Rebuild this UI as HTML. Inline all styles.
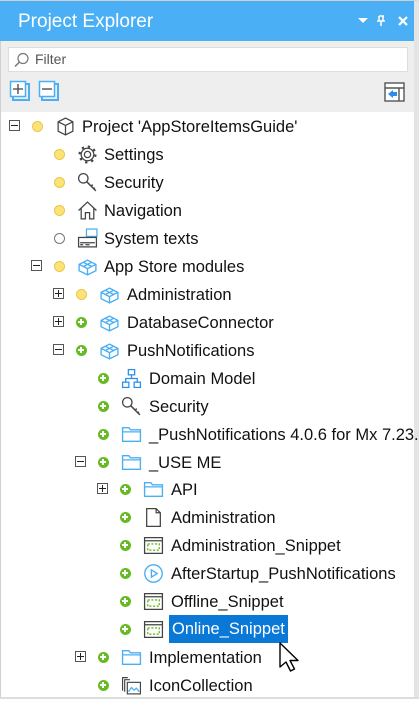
<!DOCTYPE html>
<html><head><meta charset="utf-8"><style>
*{margin:0;padding:0;box-sizing:border-box}
body{width:419px;height:699px;overflow:hidden;background:#fff;font-family:"Liberation Sans",sans-serif;position:relative}
#frame{position:absolute;left:0;top:0;width:419px;height:699px;border:1px solid #d0d0d0;border-right:5px solid #e4e4e4}
#title{position:absolute;left:0;top:1px;width:414px;height:40px;background:#4aaff5;color:#fff;font-size:19px;line-height:42px;padding-left:18px}
#tb{position:absolute;left:1px;top:41px;width:413px;height:71px;background:#eeeeee}
#filter{position:absolute;left:8px;top:47px;width:400px;height:25px;background:#fff;border:1px solid #ddd;font-size:14px;color:#555;line-height:23px;padding-left:26px}
.r{position:absolute;height:28px;font-size:16.5px;line-height:30px;color:#111;white-space:nowrap}
.exp{position:absolute;width:11px;height:11px;border:1px solid #555;background:#fff}
.exp::before{content:"";position:absolute;left:1px;top:4px;width:7px;height:1px;background:#222}
.exp.p::after{content:"";position:absolute;left:4px;top:1px;width:1px;height:7px;background:#222}
.dot{position:absolute;width:11px;height:11px;border-radius:50%;margin:-0.5px 0 0 -0.5px}
.Y{background:#fde27a;border:1px solid #e8c84a}
.O{background:#fff;border:1px solid #777}
.G{background:#66bb22}
.G::before{content:"";position:absolute;left:2.5px;top:4.5px;width:6px;height:2px;background:#fff}
.G::after{content:"";position:absolute;left:4.5px;top:2.5px;width:2px;height:6px;background:#fff}
svg.i{position:absolute;width:21px;height:21px}
.t{position:absolute}
</style></head><body>
<div id="frame"></div>
<div id="title">Project Explorer
<svg style="position:absolute;left:358px;top:17px" width="10" height="6"><path d="M0 0h10L5 5z" fill="#fff"/></svg>
<svg style="position:absolute;left:376px;top:14px" width="10" height="12"><path d="M3 1h5M3 1v5M7 1v5M1 6h8M5 6v5" stroke="#fff" stroke-width="1.5" fill="none"/></svg>
<svg style="position:absolute;left:398px;top:15px" width="10" height="10"><path d="M1 1l8 8M9 1l-8 8" stroke="#fff" stroke-width="2.2"/></svg>
</div>
<div id="tb"></div>
<div id="filter"><svg style="position:absolute;left:5px;top:4px" width="16" height="16"><circle cx="9" cy="6.5" r="5" stroke="#777" fill="none" stroke-width="1.2"/><path d="M5.5 10L1 14.5" stroke="#777" stroke-width="1.5"/></svg>Filter</div>
<svg style="position:absolute;left:9px;top:80px" width="24" height="24"><rect x="4" y="4" width="16" height="16" fill="none" stroke="#4aaff5" stroke-width="2"/><rect x="1.5" y="1.5" width="15" height="15" fill="#fff" stroke="#4aaff5" stroke-width="1.5"/><path d="M4 9h10M9 4v10" stroke="#444" stroke-width="1.3"/></svg>
<svg style="position:absolute;left:38px;top:80px" width="24" height="24"><rect x="4" y="4" width="16" height="16" fill="none" stroke="#4aaff5" stroke-width="2"/><rect x="1.5" y="1.5" width="15" height="15" fill="#fff" stroke="#4aaff5" stroke-width="1.5"/><path d="M4 9h10" stroke="#444" stroke-width="1.3"/></svg>
<svg style="position:absolute;left:384px;top:82px" width="21" height="20"><rect x="1" y="1" width="19" height="18" fill="#fff" stroke="#555" stroke-width="1.4"/><path d="M1 6h19M15 6v13" stroke="#555" stroke-width="1.4"/><path d="M4 12l5-4v8z" fill="#2b8ee8"/><rect x="8" y="10" width="5" height="4" fill="#2b8ee8"/></svg>

<div class="exp" style="left:9px;top:120px"></div>
<div class="dot Y" style="left:32px;top:121px"></div>
<svg class="i" style="left:55px;top:116px" viewBox="0 0 20 20"><path d="M10 2l7 3.5v9L10 18l-7-3.5v-9zM3 5.5L10 9l7-3.5M10 9v9" fill="none" stroke="#444" stroke-width="1.2"/></svg>
<div class="r t" style="left:82px;top:112px">Project 'AppStoreItemsGuide'</div>

<div class="dot Y" style="left:54px;top:149px"></div>
<svg class="i" style="left:77px;top:144px" viewBox="0 0 20 20"><circle cx="10" cy="10" r="3" fill="none" stroke="#444" stroke-width="1.2"/><circle cx="10" cy="10" r="6" fill="none" stroke="#444" stroke-width="1.2"/><circle cx="10" cy="10" r="7.5" fill="none" stroke="#444" stroke-width="2.2" stroke-dasharray="2.2 3.7"/></svg>
<div class="r t" style="left:104px;top:140px">Settings</div>

<div class="dot Y" style="left:54px;top:177px"></div>
<svg class="i" style="left:77px;top:172px" viewBox="0 0 20 20"><circle cx="6" cy="6" r="4.5" fill="none" stroke="#444" stroke-width="1.2"/><path d="M9 9l9 9M13 14l2-2M15.5 16.5l1.5-1.5" stroke="#444" stroke-width="1.4"/></svg>
<div class="r t" style="left:104px;top:168px">Security</div>

<div class="dot Y" style="left:54px;top:205px"></div>
<svg class="i" style="left:77px;top:200px" viewBox="0 0 20 20"><path d="M1.5 10L10 2l8.5 8M4 8v10h4v-6h4v6h4V8" fill="none" stroke="#444" stroke-width="1.2"/></svg>
<div class="r t" style="left:104px;top:196px">Navigation</div>

<div class="dot O" style="left:54px;top:233px"></div>
<svg class="i" style="left:77px;top:228px" viewBox="0 0 20 20"><rect x="9" y="1" width="10" height="7" fill="#fff" stroke="#4aaff5" stroke-width="1.2"/><rect x="1.5" y="9" width="17" height="9" fill="#fff" stroke="#444" stroke-width="1.2"/><path d="M3 14h14M3 16h3M8 16h4" stroke="#444" stroke-width="1.2"/></svg>
<div class="r t" style="left:104px;top:224px">System texts</div>

<div class="exp" style="left:31px;top:260px"></div>
<div class="dot Y" style="left:54px;top:261px"></div>
<svg class="i" style="left:77px;top:256px" viewBox="0 0 20 20"><path d="M2 8l8-4 8 4v6l-8 4-8-4zM2 8l8 4 8-4M10 12v6M6 6l8 4M14 6l-8 4" fill="none" stroke="#4aaff5" stroke-width="1.3"/></svg>
<div class="r t" style="left:104px;top:252px">App Store modules</div>

<div class="exp p" style="left:53px;top:288px"></div>
<div class="dot Y" style="left:76px;top:289px"></div>
<svg class="i" style="left:99px;top:284px" viewBox="0 0 20 20"><path d="M2 8l8-4 8 4v6l-8 4-8-4zM2 8l8 4 8-4M10 12v6M6 6l8 4M14 6l-8 4" fill="none" stroke="#4aaff5" stroke-width="1.3"/></svg>
<div class="r t" style="left:127px;top:280px">Administration</div>

<div class="exp p" style="left:53px;top:316px"></div>
<div class="dot G" style="left:76px;top:317px"></div>
<svg class="i" style="left:99px;top:312px" viewBox="0 0 20 20"><path d="M2 8l8-4 8 4v6l-8 4-8-4zM2 8l8 4 8-4M10 12v6M6 6l8 4M14 6l-8 4" fill="none" stroke="#4aaff5" stroke-width="1.3"/></svg>
<div class="r t" style="left:127px;top:308px">DatabaseConnector</div>

<div class="exp" style="left:53px;top:344px"></div>
<div class="dot G" style="left:76px;top:345px"></div>
<svg class="i" style="left:99px;top:340px" viewBox="0 0 20 20"><path d="M2 8l8-4 8 4v6l-8 4-8-4zM2 8l8 4 8-4M10 12v6M6 6l8 4M14 6l-8 4" fill="none" stroke="#4aaff5" stroke-width="1.3"/></svg>
<div class="r t" style="left:127px;top:336px">PushNotifications</div>

<div class="dot G" style="left:98px;top:373px"></div>
<svg class="i" style="left:121px;top:368px" viewBox="0 0 20 20"><rect x="7" y="1.5" width="6" height="5" fill="none" stroke="#2b8ee8" stroke-width="1.2"/><rect x="1.5" y="13.5" width="6" height="5" fill="none" stroke="#2b8ee8" stroke-width="1.2"/><rect x="12.5" y="13.5" width="6" height="5" fill="none" stroke="#2b8ee8" stroke-width="1.2"/><path d="M10 6.5v3.5M4.5 13.5V10h11v3.5" fill="none" stroke="#2b8ee8" stroke-width="1.2"/></svg>
<div class="r t" style="left:149px;top:364px">Domain Model</div>

<div class="dot G" style="left:98px;top:401px"></div>
<svg class="i" style="left:121px;top:396px" viewBox="0 0 20 20"><circle cx="6" cy="6" r="4.5" fill="none" stroke="#444" stroke-width="1.2"/><path d="M9 9l9 9M13 14l2-2M15.5 16.5l1.5-1.5" stroke="#444" stroke-width="1.4"/></svg>
<div class="r t" style="left:149px;top:392px">Security</div>

<div class="dot G" style="left:98px;top:429px"></div>
<svg class="i" style="left:121px;top:424px" viewBox="0 0 20 20"><path d="M1.5 3.5h6l1.5 2h9.5v11h-17zM1.5 7.5h17" fill="none" stroke="#4aaff5" stroke-width="1.3"/></svg>
<div class="r t" style="left:149px;top:420px">_PushNotifications 4.0.6 for Mx 7.23.</div>

<div class="exp" style="left:75px;top:456px"></div>
<div class="dot G" style="left:98px;top:457px"></div>
<svg class="i" style="left:121px;top:452px" viewBox="0 0 20 20"><path d="M1.5 3.5h6l1.5 2h9.5v11h-17zM1.5 7.5h17" fill="none" stroke="#4aaff5" stroke-width="1.3"/></svg>
<div class="r t" style="left:149px;top:448px">_USE ME</div>

<div class="exp p" style="left:97px;top:483px"></div>
<div class="dot G" style="left:120px;top:484px"></div>
<svg class="i" style="left:143px;top:479px" viewBox="0 0 20 20"><path d="M1.5 3.5h6l1.5 2h9.5v11h-17zM1.5 7.5h17" fill="none" stroke="#4aaff5" stroke-width="1.3"/></svg>
<div class="r t" style="left:171px;top:475px">API</div>

<div class="dot G" style="left:120px;top:512px"></div>
<svg class="i" style="left:143px;top:507px" viewBox="0 0 20 20"><path d="M3.5 1.5h9l4 4v13h-13zM12.5 1.5v4h4" fill="none" stroke="#444" stroke-width="1.2"/></svg>
<div class="r t" style="left:171px;top:503px">Administration</div>

<div class="dot G" style="left:120px;top:540px"></div>
<svg class="i" style="left:143px;top:535px" viewBox="0 0 20 20"><rect x="1.5" y="2.5" width="17" height="15" fill="none" stroke="#444" stroke-width="1.2"/><path d="M1.5 5.5h17" stroke="#444" stroke-width="1.2"/><rect x="4.5" y="8.5" width="11" height="6" fill="none" stroke="#66bb22" stroke-width="1.3" stroke-dasharray="2 1.5"/></svg>
<div class="r t" style="left:171px;top:531px">Administration_Snippet</div>

<div class="dot G" style="left:120px;top:568px"></div>
<svg class="i" style="left:143px;top:563px" viewBox="0 0 20 20"><circle cx="10" cy="10" r="8.3" fill="none" stroke="#4aaff5" stroke-width="1.3"/><path d="M8 6.5v7l5.5-3.5z" fill="none" stroke="#4aaff5" stroke-width="1.3"/></svg>
<div class="r t" style="left:171px;top:559px">AfterStartup_PushNotifications</div>

<div class="dot G" style="left:120px;top:596px"></div>
<svg class="i" style="left:143px;top:591px" viewBox="0 0 20 20"><rect x="1.5" y="2.5" width="17" height="15" fill="none" stroke="#444" stroke-width="1.2"/><path d="M1.5 5.5h17" stroke="#444" stroke-width="1.2"/><rect x="4.5" y="8.5" width="11" height="6" fill="none" stroke="#66bb22" stroke-width="1.3" stroke-dasharray="2 1.5"/></svg>
<div class="r t" style="left:171px;top:587px">Offline_Snippet</div>

<div class="dot G" style="left:120px;top:624px"></div>
<svg class="i" style="left:143px;top:619px" viewBox="0 0 20 20"><rect x="1.5" y="2.5" width="17" height="15" fill="none" stroke="#444" stroke-width="1.2"/><path d="M1.5 5.5h17" stroke="#444" stroke-width="1.2"/><rect x="4.5" y="8.5" width="11" height="6" fill="none" stroke="#66bb22" stroke-width="1.3" stroke-dasharray="2 1.5"/></svg>
<div class="r t" style="left:169px;top:615px;height:28px;line-height:29px;background:#0a78d7;color:#fff;padding:0 3px">Online_Snippet</div>
<svg style="position:absolute;left:276px;top:640px" width="28" height="36" viewBox="0 0 28 36"><path d="M4 3v24l6-5 4.5 9 4-2-4.5-8.5h8z" fill="#fff" stroke="#000" stroke-width="1.4" stroke-linejoin="round"/></svg>

<div class="exp p" style="left:75px;top:651px"></div>
<div class="dot G" style="left:98px;top:652px"></div>
<svg class="i" style="left:121px;top:647px" viewBox="0 0 20 20"><path d="M1.5 3.5h6l1.5 2h9.5v11h-17zM1.5 7.5h17" fill="none" stroke="#4aaff5" stroke-width="1.3"/></svg>
<div class="r t" style="left:149px;top:643px">Implementation</div>

<div class="dot G" style="left:98px;top:680px"></div>
<svg class="i" style="left:121px;top:675px" viewBox="0 0 20 20"><path d="M1.5 15V2.5h5M3.5 16V4.5h5" fill="none" stroke="#444" stroke-width="1.1"/><rect x="6" y="7" width="12.5" height="11" fill="#fff" stroke="#444" stroke-width="1.1"/><path d="M7 16l3-4 2.5 2.5 2-2 3 3.5" fill="none" stroke="#4aaff5" stroke-width="1.2"/></svg>
<div class="r t" style="left:149px;top:671px">IconCollection</div>
<div style="position:absolute;left:0;top:697px;width:419px;height:2px;background:#ddd"></div>
</body></html>
